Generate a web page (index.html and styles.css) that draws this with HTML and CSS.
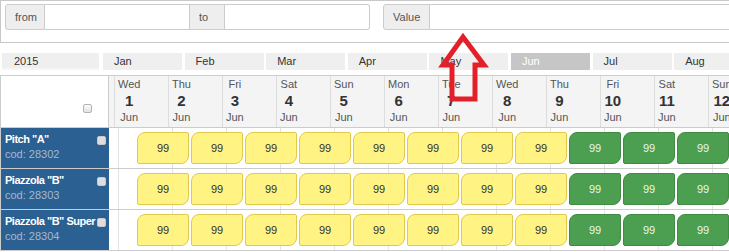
FILE: index.html
```html
<!DOCTYPE html>
<html lang="en">
<head>
    <meta charset="UTF-8">
    <meta name="viewport" content="width=device-width, initial-scale=1.0">
    <title>Availability Planner</title>
    <link rel="stylesheet" href="styles.css">
</head>
<body>
    <div class="filters">
        <div class="input-group range">
            <span class="addon addon-from">from</span>
            <input type="text" class="field">
            <span class="addon addon-to">to</span>
            <input type="text" class="field">
        </div>
        <div class="input-group value">
            <span class="addon addon-value">Value</span>
            <input type="text" class="field field-wide">
        </div>
    </div>

    <div class="months">
        <div class="year">2015</div>
        <div class="month">Jan</div>
        <div class="month">Feb</div>
        <div class="month">Mar</div>
        <div class="month">Apr</div>
        <div class="month">May</div>
        <div class="month active">Jun</div>
        <div class="month">Jul</div>
        <div class="month">Aug</div>
    </div>

    <div class="timeline">
        <div class="head">
            <div class="corner"><span class="check"></span></div>
            <div class="gutter"></div>
            <div class="day"><div class="day-inner"><span class="dname">Wed</span><span class="dnum">1</span><span class="dmon">Jun</span></div></div>
            <div class="day"><div class="day-inner"><span class="dname">Thu</span><span class="dnum">2</span><span class="dmon">Jun</span></div></div>
            <div class="day"><div class="day-inner"><span class="dname">Fri</span><span class="dnum">3</span><span class="dmon">Jun</span></div></div>
            <div class="day"><div class="day-inner"><span class="dname">Sat</span><span class="dnum">4</span><span class="dmon">Jun</span></div></div>
            <div class="day"><div class="day-inner"><span class="dname">Sun</span><span class="dnum">5</span><span class="dmon">Jun</span></div></div>
            <div class="day"><div class="day-inner"><span class="dname">Mon</span><span class="dnum">6</span><span class="dmon">Jun</span></div></div>
            <div class="day"><div class="day-inner"><span class="dname">Tue</span><span class="dnum">7</span><span class="dmon">Jun</span></div></div>
            <div class="day"><div class="day-inner"><span class="dname">Wed</span><span class="dnum">8</span><span class="dmon">Jun</span></div></div>
            <div class="day"><div class="day-inner"><span class="dname">Thu</span><span class="dnum">9</span><span class="dmon">Jun</span></div></div>
            <div class="day"><div class="day-inner"><span class="dname">Fri</span><span class="dnum">10</span><span class="dmon">Jun</span></div></div>
            <div class="day"><div class="day-inner"><span class="dname">Sat</span><span class="dnum">11</span><span class="dmon">Jun</span></div></div>
            <div class="day"><div class="day-inner"><span class="dname">Sun</span><span class="dnum">12</span><span class="dmon">Jun</span></div></div>
        </div>

        <div class="row">
            <div class="label">
                <div class="label-text"><div class="name">Pitch "A"</div><div class="code">cod: 28302</div></div>
                <span class="check"></span>
            </div>
            <div class="track">
                <div class="slot">99</div><div class="slot">99</div><div class="slot">99</div><div class="slot">99</div>
                <div class="slot">99</div><div class="slot">99</div><div class="slot">99</div><div class="slot">99</div>
                <div class="slot free">99</div><div class="slot free">99</div><div class="slot free">99</div>
            </div>
        </div>

        <div class="row">
            <div class="label">
                <div class="label-text"><div class="name">Piazzola "B"</div><div class="code">cod: 28303</div></div>
                <span class="check"></span>
            </div>
            <div class="track">
                <div class="slot">99</div><div class="slot">99</div><div class="slot">99</div><div class="slot">99</div>
                <div class="slot">99</div><div class="slot">99</div><div class="slot">99</div><div class="slot">99</div>
                <div class="slot free">99</div><div class="slot free">99</div><div class="slot free">99</div>
            </div>
        </div>

        <div class="row">
            <div class="label">
                <div class="label-text"><div class="name">Piazzola "B" Super</div><div class="code">cod: 28304</div></div>
                <span class="check"></span>
            </div>
            <div class="track">
                <div class="slot">99</div><div class="slot">99</div><div class="slot">99</div><div class="slot">99</div>
                <div class="slot">99</div><div class="slot">99</div><div class="slot">99</div><div class="slot">99</div>
                <div class="slot free">99</div><div class="slot free">99</div><div class="slot free">99</div>
            </div>
        </div>
    </div>

    <!-- annotation arrow drawn over the page -->
    <svg class="arrow" width="729" height="252" viewBox="0 0 729 252">
        <polygon points="463,37 484,65 475,65 475,99 452,99 452,65 443,65" fill="none" stroke="#e3202a" stroke-width="5" stroke-linejoin="miter"/>
    </svg>
</body>
</html>
```

FILE: styles.css
```css
body {
    margin: 0;
    width: 729px;
    height: 252px;
    overflow: hidden;
    position: relative;
    font-family: "Liberation Sans", Arial, sans-serif;
    font-size: 11px;
    color: #333;
    background: #fff;
}

/* Filter bar */
.filters {
    display: flex;
    gap: 13px;
    height: 43px;
    box-sizing: border-box;
    padding: 3px 0 0 4px;
    border-top: 1px solid #c8c8c8;
    border-bottom: 1px solid #c8c8c8;
    border-left: 1px solid #c8c8c8;
}

.input-group {
    display: flex;
    flex-shrink: 0;
    height: 26px;
}

.addon {
    display: flex;
    align-items: center;
    box-sizing: border-box;
    padding-left: 9px;
    background: #eee;
    border: 1px solid #ccc;
    color: #555;
}

.addon-from {
    width: 40px;
    border-radius: 3px 0 0 3px;
}

.addon-to {
    width: 35px;
    border-left: none;
}

.addon-value {
    width: 47px;
    border-radius: 3px 0 0 3px;
}

.field {
    width: 145px;
    height: 26px;
    box-sizing: border-box;
    margin: 0;
    padding: 0 6px;
    border: 1px solid #ccc;
    border-left: none;
    outline: none;
    background: #fff;
}

.range .field:last-child {
    border-radius: 0 3px 3px 0;
}

.field-wide {
    width: 320px;
}

/* Month strip */
.months {
    display: flex;
    align-items: flex-start;
    width: 800px;
    margin-top: 10px;
    padding-left: 2px;
    height: 19px;
}

.year {
    flex: 0 0 97px;
    height: 17px;
    line-height: 17px;
    padding-left: 12px;
    box-sizing: border-box;
    margin-right: 4px;
    background: #efefef;
    border-bottom: 2px solid #f6f6f6;
}

.month {
    flex: 0 0 79px;
    height: 17px;
    line-height: 17px;
    padding-left: 11px;
    box-sizing: border-box;
    margin-right: 2.6px;
    background: #efefef;
}

.month.active {
    background: #c6c6c6;
    color: #fff;
}

/* Timeline grid */
.timeline {
    margin-top: 3px;
    width: 800px;
    border-top: 1px solid #ccc;
    border-left: 1px solid #ccc;
}

.head {
    display: flex;
    height: 52px;
    box-sizing: border-box;
    border-bottom: 1px solid #ccc;
}

.corner {
    flex: 0 0 108px;
    display: flex;
    justify-content: flex-end;
    align-items: flex-end;
    padding: 0 16px 14px 0;
    box-sizing: border-box;
    border-right: 1px solid #ccc;
    background: #fff;
}

.gutter {
    flex: 0 0 6px;
    box-sizing: border-box;
    background: #f4f4f4;
    border-right: 1px solid #ddd;
}

.day {
    flex: 0 0 54px;
    box-sizing: border-box;
    padding: 1px 0 0 3px;
    background: #f4f4f4;
    border-right: 1px solid #ddd;
}

.day-inner {
    display: inline-flex;
    flex-direction: column;
    align-items: center;
    color: #555;
}

.dname,
.dmon {
    line-height: 15px;
}

.dnum {
    font-size: 15px;
    font-weight: bold;
    line-height: 18px;
    color: #333;
}

.check {
    display: block;
    flex-shrink: 0;
    width: 9px;
    height: 9px;
    box-sizing: border-box;
    border: 1px solid #b4b4b4;
    border-radius: 2px;
    background: linear-gradient(#fbfbfb, #e2e2e2);
}

.row {
    display: flex;
    height: 41px;
    box-sizing: border-box;
    border-bottom: 1px solid #ccc;
}

.label {
    flex: 0 0 108px;
    display: flex;
    justify-content: space-between;
    align-items: flex-start;
    padding: 4px 3px 0 4px;
    box-sizing: border-box;
    background: #2b6092;
}

.name {
    font-weight: bold;
    color: #fff;
    line-height: 14px;
    letter-spacing: -0.5px;
    white-space: nowrap;
}

.code {
    margin-top: 1px;
    line-height: 14px;
    color: #a3b9cf;
}

.label .check {
    margin-top: 4px;
    border-color: #c8c8c8;
    background: #dedede;
}

.track {
    flex: 1;
    display: flex;
    align-items: flex-start;
    padding: 4px 0 0 28px;
    background-image: linear-gradient(to right, #e4e4e4 1px, transparent 1px);
    background-size: 54px 100%;
    background-position: 9px 0;
}

.slot {
    flex: 0 0 52px;
    height: 32px;
    margin-right: 2px;
    box-sizing: border-box;
    display: flex;
    align-items: center;
    justify-content: center;
    border: 1px solid #e2c94c;
    border-radius: 8px 2px 8px 2px;
    background: #fff383;
    color: #333;
}

.slot.free {
    border-color: #3e8b41;
    background: #4c9f50;
    color: #eaf6ea;
}

.arrow {
    position: absolute;
    top: 0;
    left: 0;
    pointer-events: none;
}
```
